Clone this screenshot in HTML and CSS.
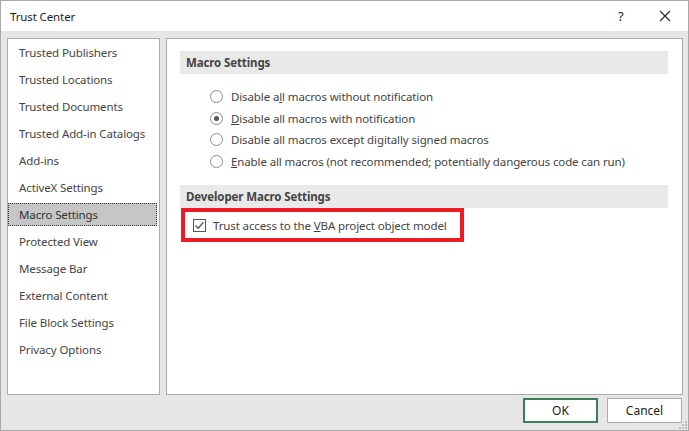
FILE: index.html
```html
<!DOCTYPE html>
<html>
<head>
<meta charset="utf-8">
<link rel="stylesheet" href="styles.css">
</head>
<body>
<div class="window">
  <div class="titlebar">
    <span class="title">Trust Center</span>
    <span class="help">?</span>
    <svg class="close" width="12" height="12" viewBox="0 0 12 12"><path d="M1 1 L11 11 M11 1 L1 11" stroke="#222" stroke-width="1.1" fill="none"/></svg>
  </div>
  <div class="client">
    <div class="panels">
      <ul class="nav">
        <li>Trusted Publishers</li>
        <li>Trusted Locations</li>
        <li>Trusted Documents</li>
        <li>Trusted Add-in Catalogs</li>
        <li>Add-ins</li>
        <li>ActiveX Settings</li>
        <li class="selected">Macro Settings</li>
        <li>Protected View</li>
        <li>Message Bar</li>
        <li>External Content</li>
        <li>File Block Settings</li>
        <li>Privacy Options</li>
      </ul>
      <div class="content">
        <div class="section-head">Macro Settings</div>
        <div class="radios">
          <div class="row"><span class="radio"></span><span>Disable a<u>l</u>l macros without notification</span></div>
          <div class="row"><span class="radio checked"></span><span><u>D</u>isable all macros with notification</span></div>
          <div class="row"><span class="radio"></span><span>Disable all macros except di<u>g</u>itally signed macros</span></div>
          <div class="row"><span class="radio"></span><span><u>E</u>nable all macros (not recommended; potentially dangerous code can run)</span></div>
        </div>
        <div class="section-head dev">Developer Macro Settings</div>
        <div class="highlight">
          <span class="checkbox"><svg width="11" height="11" viewBox="0 0 11 11"><path d="M1.5 5.5 L4.2 8.3 L9.5 2.2" stroke="#555" stroke-width="1.3" fill="none"/></svg></span>
          <span>Trust access to the <u>V</u>BA project object model</span>
        </div>
      </div>
    </div>
    <div class="footer">
      <button class="btn ok">OK</button>
      <button class="btn">Cancel</button>
    </div>
    <svg class="grip" width="8" height="8" viewBox="0 0 8 8">
      <rect x="6" y="0" width="2" height="2" fill="#bdbdbd"/>
      <rect x="3" y="3" width="2" height="2" fill="#bdbdbd"/>
      <rect x="6" y="3" width="2" height="2" fill="#bdbdbd"/>
      <rect x="0" y="6" width="2" height="2" fill="#bdbdbd"/>
      <rect x="3" y="6" width="2" height="2" fill="#bdbdbd"/>
      <rect x="6" y="6" width="2" height="2" fill="#bdbdbd"/>
    </svg>
  </div>
</div>
</body>
</html>
```
FILE: styles.css
```css
* { box-sizing: border-box; }
html, body { margin: 0; padding: 0; }
body {
  font-family: "Segoe UI", "Noto Sans", "Open Sans", sans-serif;
  font-size: 11.5px;
  letter-spacing: -0.12px;
  color: #444;
}
.window {
  width: 689px;
  height: 431px;
  border: 1px solid #a9a9a9;
  background: #e6e6e6;
  display: flex;
  flex-direction: column;
}
.titlebar {
  height: 30px;
  background: #fff;
  display: flex;
  align-items: center;
  padding-left: 9px;
  color: #1e1e1e;
  flex: none;
}
.title { flex: 1; }
.help { width: 12px; margin-right: 29px; font-size: 13px; color: #222; }
.close { margin-right: 17px; }
.client {
  flex: 1;
  position: relative;
  padding: 7px 5px 0 6px;
  display: flex;
  flex-direction: column;
}
.panels {
  height: 357px;
  display: flex;
  gap: 6px;
}
.nav {
  list-style: none;
  margin: 0;
  padding: 2px 2px 0 0;
  width: 153px;
  background: #fff;
  border: 1px solid #acacac;
}
.nav li {
  height: 23px;
  margin-bottom: 4px;
  padding-left: 10px;
  line-height: 21px;
  border: 1px solid transparent;
  white-space: nowrap;
}
.nav li.selected {
  background: #c6c6c6;
  border: 1px dotted #333;
  color: #333;
}
.content {
  flex: 1;
  background: #fff;
  border: 1px solid #acacac;
  padding: 12px 14px 0 13px;
}
.section-head {
  height: 23px;
  background: #e9e9e9;
  font-weight: bold;
  line-height: 23px;
  padding-left: 6px;
  color: #444;
}
.radios {
  padding: 12px 0 0 30px;
}
.row {
  height: 21.5px;
  display: flex;
  align-items: center;
  gap: 8px;
  white-space: nowrap;
}
.radio {
  width: 13px;
  height: 13px;
  border: 1px solid #8c8c8c;
  border-radius: 50%;
  background: #fff;
  display: flex;
  align-items: center;
  justify-content: center;
  flex: none;
}
.radio.checked::after {
  content: "";
  width: 5px;
  height: 5px;
  border-radius: 50%;
  background: #555;
}
.section-head.dev { margin-top: 13px; }
.highlight {
  margin-left: 1px;
  width: 283px;
  height: 34px;
  border: 4px solid #ed1c24;
  display: flex;
  align-items: center;
  padding-left: 8px;
  gap: 7px;
  white-space: nowrap;
}
.checkbox {
  width: 13px;
  height: 13px;
  border: 1px solid #555;
  background: #fff;
  display: flex;
  align-items: center;
  justify-content: center;
  flex: none;
}
.checkbox svg { display: block; }
.footer {
  margin-top: 3px;
  display: flex;
  justify-content: flex-end;
  gap: 9px;
  padding-right: 1px;
}
.btn {
  width: 75px;
  height: 25px;
  background: #fff;
  border: 1px solid #adadad;
  font-family: inherit;
  font-size: 12px;
  color: #222;
  padding: 0;
}
.btn.ok { border: 2px solid #3b7d58; }
.grip {
  position: absolute;
  right: 1px;
  bottom: 1px;
}
```
